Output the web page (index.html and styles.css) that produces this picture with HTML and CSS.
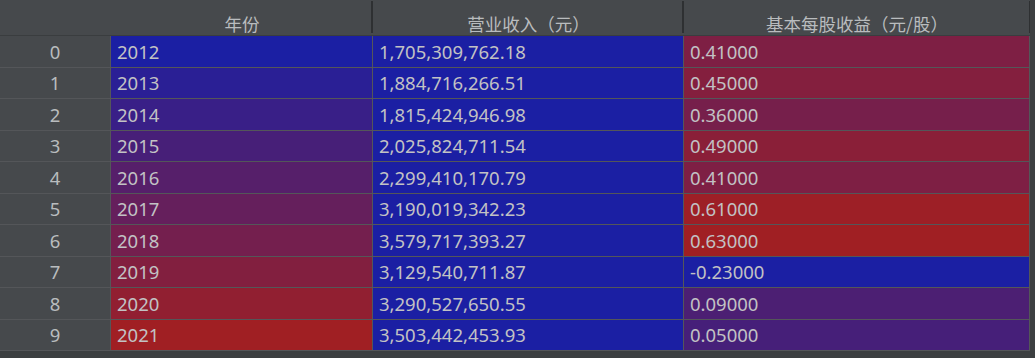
FILE: index.html
```html
<!DOCTYPE html>
<html lang="zh">
<head>
<meta charset="utf-8">
<title>DataFrame</title>
<link rel="stylesheet" href="styles.css">
</head>
<body>
<div class="view">
  <div class="header">
    <div class="hcell hidx"></div>
    <div class="hcell hc1">年份</div>
    <div class="hcell hc2">营业收入（元）</div>
    <div class="hcell hc3">基本每股收益（元/股）</div>
  </div>
  <div class="grid">
    <div class="idx">0</div><div class="cell" style="background:rgb(27,31,163)">2012</div><div class="cell" style="background:rgb(27,31,163)">1,705,309,762.18</div><div class="cell" style="background:rgb(126,31,68)">0.41000</div>
    <div class="idx">1</div><div class="cell" style="background:rgb(42,31,149)">2013</div><div class="cell" style="background:rgb(27,31,163)">1,884,716,266.51</div><div class="cell" style="background:rgb(132,31,62)">0.45000</div>
    <div class="idx">2</div><div class="cell" style="background:rgb(57,31,135)">2014</div><div class="cell" style="background:rgb(27,31,163)">1,815,424,946.98</div><div class="cell" style="background:rgb(118,31,75)">0.36000</div>
    <div class="idx">3</div><div class="cell" style="background:rgb(71,31,120)">2015</div><div class="cell" style="background:rgb(27,31,163)">2,025,824,711.54</div><div class="cell" style="background:rgb(138,31,56)">0.49000</div>
    <div class="idx">4</div><div class="cell" style="background:rgb(86,31,106)">2016</div><div class="cell" style="background:rgb(27,31,163)">2,299,410,170.79</div><div class="cell" style="background:rgb(126,31,68)">0.41000</div>
    <div class="idx">5</div><div class="cell" style="background:rgb(101,31,92)">2017</div><div class="cell" style="background:rgb(27,31,163)">3,190,019,342.23</div><div class="cell" style="background:rgb(157,31,38)">0.61000</div>
    <div class="idx">6</div><div class="cell" style="background:rgb(116,31,78)">2018</div><div class="cell" style="background:rgb(27,31,163)">3,579,717,393.27</div><div class="cell" style="background:rgb(160,31,35)">0.63000</div>
    <div class="idx">7</div><div class="cell" style="background:rgb(130,31,63)">2019</div><div class="cell" style="background:rgb(27,31,163)">3,129,540,711.87</div><div class="cell" style="background:rgb(27,31,163)">-0.23000</div>
    <div class="idx">8</div><div class="cell" style="background:rgb(145,31,49)">2020</div><div class="cell" style="background:rgb(27,31,163)">3,290,527,650.55</div><div class="cell" style="background:rgb(76,31,115)">0.09000</div>
    <div class="idx">9</div><div class="cell" style="background:rgb(160,31,35)">2021</div><div class="cell" style="background:rgb(27,31,163)">3,503,442,453.93</div><div class="cell" style="background:rgb(70,31,121)">0.05000</div>
  </div>
</div>
</body>
</html>
```

FILE: styles.css
```css
html, body {
  margin: 0;
  padding: 0;
  background: #3c3f41;
}

body {
  width: 1035px;
  height: 358px;
  overflow: hidden;
  font-family: "Noto Sans", "Noto Sans CJK SC", sans-serif;
  color: #bdbdbd;
}

.view {
  display: flex;
  flex-direction: column;
}

.header {
  display: flex;
  height: 35px;
  border-bottom: 1px solid #3a3d3f;
  width: 1030px;
  background: #46494c;
}

.hcell {
  height: 35px;
  box-sizing: border-box;
  padding-top: 14px;
  line-height: 20px;
  font-size: 17.5px;
  text-align: center;
  font-family: "Noto Sans CJK SC", "Noto Sans", sans-serif;
  color: #b9bcbe;
  background: linear-gradient(#2e3032, #2e3032) no-repeat right 0 top 1px / 2px 32px, #46494c;
}

.hidx {
  width: 111px;
  background: #46494c;
}

.hc1 {
  width: 262px;
}

.hc2 {
  width: 311px;
}

.hc3 {
  width: 346px;
  background: linear-gradient(#2e3032, #2e3032) no-repeat right 0 top 1px / 1px 32px, #46494c;
}

.grid {
  display: grid;
  grid-template-columns: 110px 261px 310px 345px;
  grid-auto-rows: 30.5px;
  column-gap: 1px;
  row-gap: 1px;
  width: 1029px;
  background: #545659;
  border-right: 1px solid #545659;
  border-bottom: 1px solid #545659;
  font-size: 18.5px;
}

.idx {
  background: #46494c;
  display: flex;
  align-items: center;
  justify-content: center;
  color: #b9bcbe;
}

.cell {
  display: flex;
  align-items: center;
  padding-left: 6px;
  color: #c2c2c4;
  white-space: nowrap;
}
```
